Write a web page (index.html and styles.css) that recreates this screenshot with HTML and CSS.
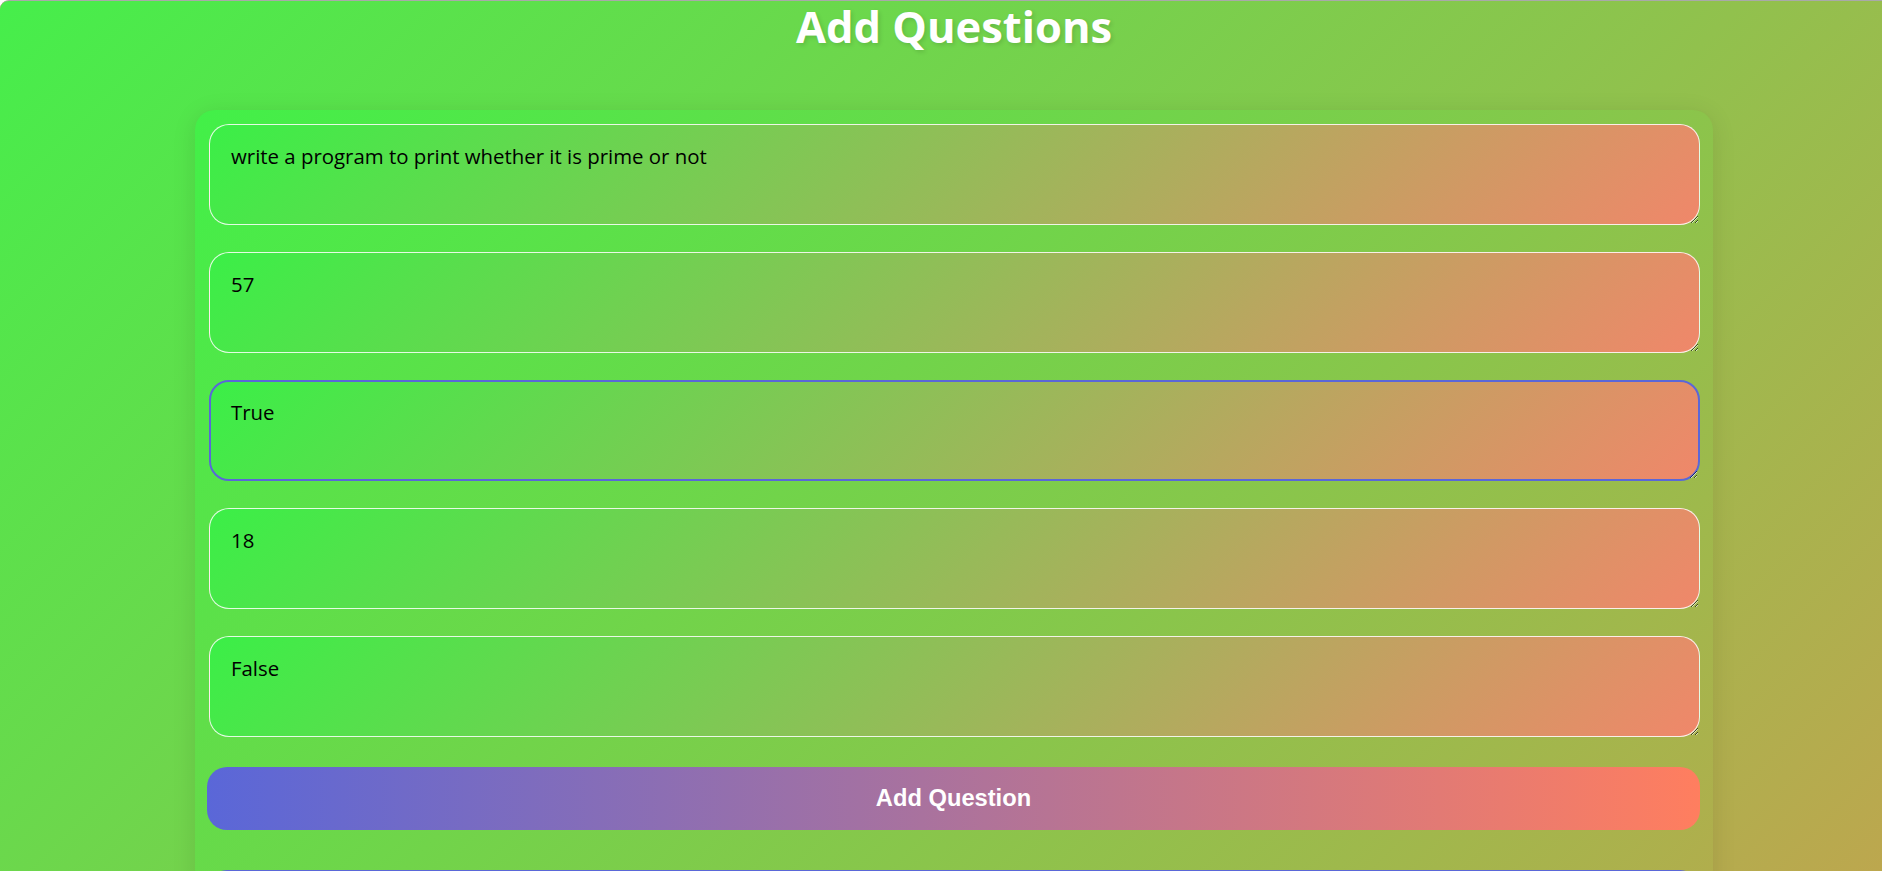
FILE: index.html
```html
<!DOCTYPE html>
<html lang="en">
<head>
<meta charset="utf-8">
<title>Add Questions</title>
<link rel="stylesheet" href="styles.css">
</head>
<body>
<div class="page">
  <h1 class="title">Add Questions</h1>
  <form class="card">
    <textarea class="field">write a program to print whether it is prime or not</textarea>
    <textarea class="field">57</textarea>
    <textarea class="field field-active">True</textarea>
    <textarea class="field">18</textarea>
    <textarea class="field">False</textarea>
    <button type="button" class="btn btn-add">Add Question</button>
    <button type="button" class="btn btn-submit">Submit Questions</button>
  </form>
</div>
</body>
</html>
```

FILE: styles.css
```css
html {
  background: #ffffff;
}
body {
  margin: 0;
  font-family: "Open Sans", "Noto Sans", sans-serif;
}
.page {
  min-height: 871px;
  padding: 0 0 40px 26px;
  border-top: 1px solid #a9a9a9;
  border-radius: 9px 0 0 0;
  background: linear-gradient(135deg, #46ee4b 0%, #ff7f50 100%);
  background-size: 100% 2420px;
  background-repeat: no-repeat;
  background-color: #ff7f50;
  display: flex;
  flex-direction: column;
  align-items: center;
}
.title {
  margin: 0;
  padding-top: 4px;
  height: 109px;
  box-sizing: border-box;
  font-size: 43.5px;
  line-height: 44px;
  font-weight: 700;
  color: #ffffff;
  text-shadow: 2px 2px 4px rgba(0, 0, 0, 0.12);
}
.card {
  width: 1518px;
  box-sizing: border-box;
  padding: 14px 13px 30px 12px;
  border-radius: 20px;
  background: linear-gradient(135deg, #42f048 0%, #ff7f50 100%);
  background-size: 100% 2380px;
  background-repeat: no-repeat;
  background-color: #ff7f50;
  box-shadow: 0 4px 24px rgba(0, 0, 0, 0.1);
  display: flex;
  flex-direction: column;
  align-items: center;
  gap: 27px;
}
.field {
  display: block;
  width: calc(100% - 2px);
  height: 101px;
  margin: 0 0 0 2px;
  box-sizing: border-box;
  padding: 18px 21px;
  border: 1px solid rgba(255, 255, 255, 0.85);
  border-radius: 20px;
  background: linear-gradient(135deg, #3bef47 0%, #f0876a 100%);
  font-family: "Open Sans", "Noto Sans", sans-serif;
  font-size: 20.4px;
  line-height: 27px;
  color: #000000;
  outline: none;
}
.field-active {
  border: 2px solid #5a67d8;
  padding: 17px 20px;
}
.btn {
  display: block;
  width: 100%;
  height: 63px;
  border: none;
  border-radius: 20px;
  color: #ffffff;
  font-family: "Liberation Sans", Arial, sans-serif;
  font-size: 23.7px;
  font-weight: 700;
  cursor: pointer;
}
.btn-add {
  margin-top: 3px;
  background: linear-gradient(to right, #5a67d8 0%, #ff7e5f 100%);
}
.btn-submit {
  margin-top: 13px;
  background: #5a67d8;
}
```
